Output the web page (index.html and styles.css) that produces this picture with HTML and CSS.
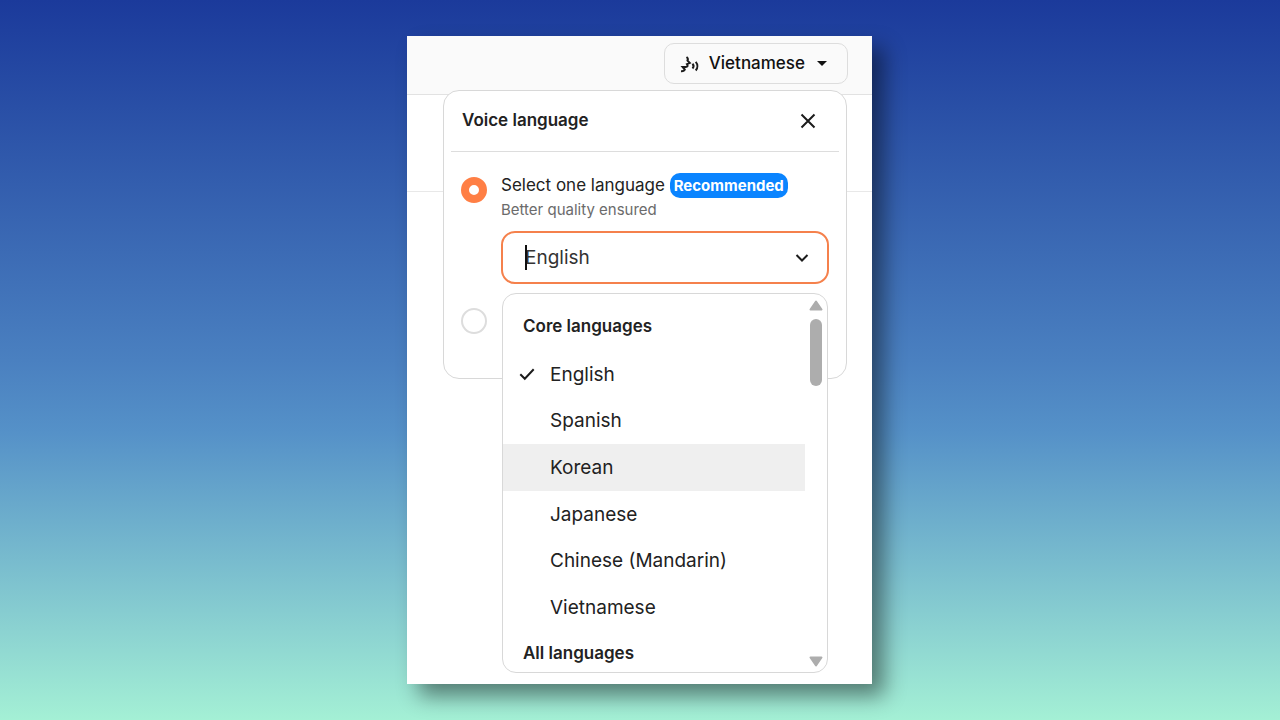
FILE: index.html
```html
<!DOCTYPE html>
<html lang="en">
<head>
  <meta charset="utf-8">
  <title>Voice language</title>
  <link rel="stylesheet" href="styles.css">
</head>
<body>
  <main class="window">
    <header class="topbar">
      <button type="button" class="lang-btn" aria-expanded="true">
        <svg class="icon-voice" viewBox="0 0 20 18" aria-hidden="true">
          <path d="M6.500 1C8 2 8.200 3.200 7.500 4.600L9.800 7L7 8.200C8.200 10 7.600 11 5.500 10.900L2.600 11L4.800 13.600C4.400 15 3 15.400 1 15.300"/>
          <path d="M12.500 7.800c1.200 1.300 1.200 3.400 0 4.700M15.700 5.800c2.200 2.500 2.200 6.200 0 8.700"/>
        </svg>
        Vietnamese
        <span class="arrow"></span>
      </button>
    </header>
    <div class="strip"></div>

    <!-- Voice language popover -->
    <section class="popover">
      <div class="popover-head">
        <h1>Voice language</h1>
        <button type="button" class="close-btn" aria-label="Close">
          <svg viewBox="0 0 16 16" aria-hidden="true"><path d="M1.5 1.5l13 13M14.5 1.5l-13 13"/></svg>
        </button>
      </div>

      <div class="choice">
        <input type="radio" name="mode" id="mode-one" checked>
        <div class="choice-body">
          <label for="mode-one">Select one language <span class="badge">Recommended</span></label>
          <p class="hint">Better quality ensured</p>
          <div class="combo">
            <input type="text" class="combo-input" value="English" aria-label="Language">
            <svg class="chevron" viewBox="0 0 14 10" aria-hidden="true"><path d="M1.5 2l5.500 5.500L12.500 2"/></svg>

            <!-- Dropdown list -->
            <div class="menu">
              <div class="menu-list">
                <h2>Core languages</h2>
                <ul>
                  <li><button type="button" class="option selected"><svg class="check" viewBox="0 0 16 14" aria-hidden="true"><path d="M1.3 7.2l4.500 4.500L14.700 2.300"/></svg>English</button></li>
                  <li><button type="button" class="option">Spanish</button></li>
                  <li><button type="button" class="option hover">Korean</button></li>
                  <li><button type="button" class="option">Japanese</button></li>
                  <li><button type="button" class="option">Chinese (Mandarin)</button></li>
                  <li><button type="button" class="option">Vietnamese</button></li>
                </ul>
                <h2>All languages</h2>
              </div>
              <div class="scrollbar">
                <svg viewBox="0 0 14 11" aria-hidden="true"><path d="M7 1.5L12.500 9.500h-11z"/></svg>
                <div class="thumb"></div>
                <svg viewBox="0 0 14 11" aria-hidden="true"><path d="M7 9.500L12.500 1.500h-11z"/></svg>
              </div>
            </div>
          </div>
        </div>
      </div>

      <div class="choice">
        <input type="radio" name="mode" id="mode-multi" aria-label="Multiple languages">
      </div>
    </section>
  </main>
</body>
</html>
```

FILE: styles.css
```css
* { box-sizing: border-box; }

body {
  margin: 0;
  min-height: 100vh;
  padding: 36px 37px 36px 36px;
  display: flex;
  justify-content: center;
  background: linear-gradient(#1b3a9b 0%, #4a80c0 50%, #5591c8 60%, #a4f0d5 100%);
  font-family: Inter, "Liberation Sans", sans-serif;
  color: #222;
}

button, input { font: inherit; color: inherit; }
button { border: 0; background: none; padding: 0; cursor: pointer; }
h1, h2, p, ul { margin: 0; padding: 0; }
svg { flex: none; fill: none; stroke: #1c1c1c; stroke-width: 2; }

.window {
  position: relative;
  width: 100%;
  max-width: 465px;
  background: #fff;
  box-shadow: 12px 12px 20px rgba(0, 0, 0, 0.45);
}

/* --- Top bar --- */
.topbar {
  display: flex;
  justify-content: flex-end;
  padding: 7px 24px 10px;
  background: #fafafa;
  border-bottom: 1px solid #e2e2e2;
}
.lang-btn {
  display: flex;
  align-items: center;
  gap: 9px;
  height: 41px;
  padding: 0 20px 2px 15px;
  border: 1px solid #ddd;
  border-radius: 10px;
  font-size: 17px;
  font-weight: 500;
  color: #111;
}
.icon-voice { width: 20px; height: 18px; margin-top: 4px; }
.arrow {
  margin: 2px 0 0 3px;
  border: 5px solid transparent;
  border-top-color: #111;
  border-bottom: 0;
}
.strip { height: 97px; border-bottom: 1px solid #e8e8e8; }

/* --- Popover --- */
.popover {
  position: absolute;
  top: 54px;
  left: 36px;
  right: 25px;
  padding: 0 7px 44px;
  background: #fff;
  border: 1px solid #d8d8d8;
  border-radius: 16px;
}
.popover-head {
  display: flex;
  justify-content: space-between;
  align-items: center;
  height: 61px;
  padding: 0 23px 0 11px;
  border-bottom: 1px solid #ddd;
}
.popover-head h1 { padding-bottom: 2px; font-size: 17px; font-weight: 600; }
.close-btn { display: flex; }
.close-btn svg { width: 16px; height: 16px; }

.choice { display: flex; gap: 14px; padding: 20px 10px 0; }
.choice + .choice { padding-top: 19px; }
.choice-body { flex: 1; min-width: 0; }
input[type="radio"] {
  appearance: none;
  flex: none;
  width: 26px;
  height: 26px;
  margin: 5px 0 0;
  border: 2px solid #ddd;
  border-radius: 50%;
  background: #fff;
}
input[type="radio"]:checked { border: 8px solid #ff7f45; }
.choice label { display: block; font-size: 17px; line-height: 26px; }
.badge {
  display: inline-block;
  padding: 0 4px;
  border-radius: 10px;
  background: #0a84ff;
  color: #fff;
  font-size: 15px;
  font-weight: 700;
  line-height: 25px;
}
.hint { font-size: 15px; line-height: 24px; color: #6b6b6b; }

/* --- Combo box --- */
.combo {
  position: relative;
  display: flex;
  align-items: center;
  height: 53px;
  margin-top: 9px;
  padding: 0 18px 0 22px;
  border: 2px solid #f5814c;
  border-radius: 14px;
}
.combo::before {
  content: "";
  position: absolute;
  left: 22px;
  width: 2px;
  height: 25px;
  background: #111;
}
.combo-input {
  flex: 1;
  min-width: 0;
  border: 0;
  padding: 0;
  outline: 0;
  background: none;
  font-size: 19px;
  color: #333;
}
.chevron { width: 14px; height: 10px; }

/* --- Dropdown menu --- */
.menu {
  position: absolute;
  top: 60px;
  left: -1px;
  right: -1px;
  display: flex;
  height: 380px;
  overflow: hidden;
  background: #fff;
  border: 1px solid #d8d8d8;
  border-radius: 14px;
}
.menu-list { flex: 1; }
.menu h2 {
  padding: 20px 20px 13px;
  font-size: 17px;
  font-weight: 600;
  line-height: 24px;
}
.menu ul + h2 { padding-top: 10px; }
.menu ul {
  display: grid;
  grid-auto-rows: 1fr;
  height: 280px;
  list-style: none;
}
.option {
  display: flex;
  align-items: center;
  width: 100%;
  height: 100%;
  padding-left: 47px;
  font-size: 19px;
  text-align: left;
}
.option.selected { gap: 15px; padding-left: 16px; }
.option.hover, .option:hover { background: #efefef; }
.check { width: 16px; height: 14px; }

.scrollbar {
  display: flex;
  flex-direction: column;
  align-items: center;
  width: 22px;
  padding: 6px 0 5px;
}
.scrollbar svg {
  width: 14px;
  height: 11px;
  fill: #adadad;
  stroke: #adadad;
  stroke-linejoin: round;
}
.scrollbar svg:last-child { margin-top: auto; }
.thumb {
  width: 12px;
  height: 67px;
  margin-top: 8px;
  border-radius: 6px;
  background: #adadad;
}
```
